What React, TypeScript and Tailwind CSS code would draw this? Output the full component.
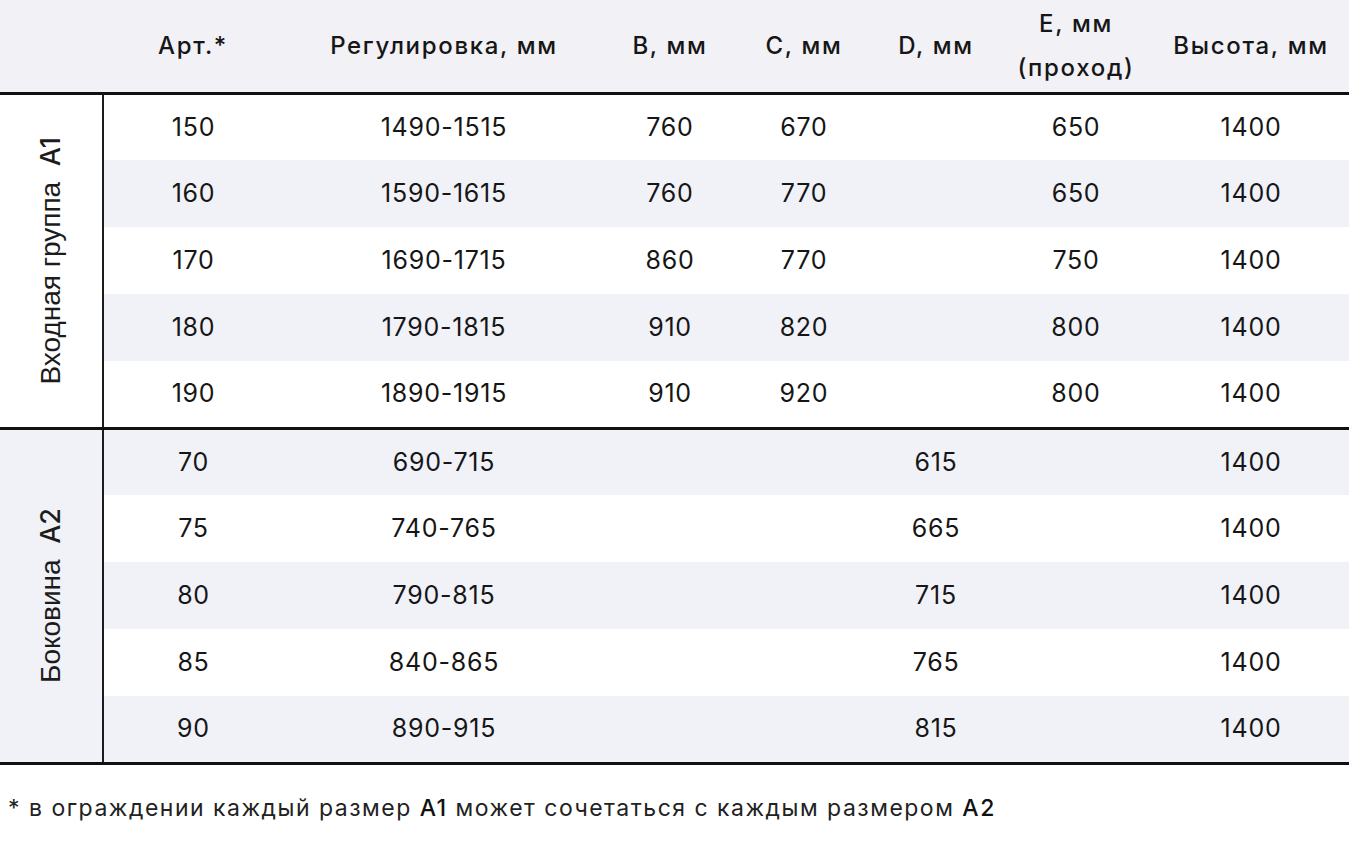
const a1 = [
  ['150', '1490-1515', '760', '670', '', '650', '1400'],
  ['160', '1590-1615', '760', '770', '', '650', '1400'],
  ['170', '1690-1715', '860', '770', '', '750', '1400'],
  ['180', '1790-1815', '910', '820', '', '800', '1400'],
  ['190', '1890-1915', '910', '920', '', '800', '1400'],
]

const a2 = [
  ['70', '690-715', '', '', '615', '', '1400'],
  ['75', '740-765', '', '', '665', '', '1400'],
  ['80', '790-815', '', '', '715', '', '1400'],
  ['85', '840-865', '', '', '765', '', '1400'],
  ['90', '890-915', '', '', '815', '', '1400'],
]

const widths = ['w-[180px]', 'w-[322px]', 'w-[130px]', 'w-[138px]', 'w-[126px]', 'w-[154px]', 'w-[196px]']

function GroupRows({ rows, label, code, shadeLabel }: {
  rows: string[][]
  label: string
  code: string
  shadeLabel: boolean
}) {
  return (
    <>
      {rows.map((row, i) => (
        <tr
          key={row[0]}
          className={`${i % 2 === (shadeLabel ? 0 : 1) ? 'bg-[#f1f1f8]' : 'bg-white'} ${i === rows.length - 1 ? 'border-b-[3px] border-[#111]' : ''}`}
        >
          {i === 0 && (
            <td
              rowSpan={rows.length}
              className={`border-r-2 border-[#1c1c1c] p-0 align-middle ${shadeLabel ? 'bg-[#f1f1f8]' : 'bg-white'}`}
            >
              <div className="flex justify-center">
                <span
                  className="whitespace-nowrap text-[28px] leading-none text-[#1c1c1c] [writing-mode:vertical-rl] rotate-180"
                  style={{ fontFamily: '"Liberation Sans", Arial, sans-serif' }}
                >
                  {label}
                  {'\u00a0\u00a0'}
                  <span className="font-['Inter'] text-[27px] font-medium">{code}</span>
                </span>
              </div>
            </td>
          )}
          {row.map((cell, j) => (
            <td key={j} className="h-[67px] p-0 text-center text-[25px] tracking-[0.03em] text-[#161616]">
              {cell}
            </td>
          ))}
        </tr>
      ))}
    </>
  )
}

export default function App() {
  return (
    <div className="min-h-[845px] bg-white font-['Inter',sans-serif] text-[#161616]">
      <table className="w-[1349px] table-fixed border-collapse">
        <colgroup>
          <col className="w-[103px]" />
          {widths.map((w) => (
            <col key={w} className={w} />
          ))}
        </colgroup>
        <thead>
          <tr className="h-[93px] border-b-[3px] border-[#111] bg-[#f1f1f6] text-[24px] tracking-[0.07em]">
            <th className="p-0" />
            <th className="p-0 font-medium">Арт.*</th>
            <th className="p-0 font-medium">Регулировка, мм</th>
            <th className="p-0 font-medium">B, мм</th>
            <th className="p-0 font-medium">C, мм</th>
            <th className="p-0 font-medium">D, мм</th>
            <th className="p-0 font-medium leading-[44px]">
              E, мм
              <br />
              (проход)
            </th>
            <th className="p-0 font-medium">Высота, мм</th>
          </tr>
        </thead>
        <tbody>
          <GroupRows rows={a1} label="Входная группа" code="A1" shadeLabel={false} />
          <GroupRows rows={a2} label="Боковина" code="A2" shadeLabel={true} />
        </tbody>
      </table>
      <p className="mt-[26px] pl-[8px] text-[23px] tracking-[0.065em] text-[#222]">
        * в ограждении каждый размер <span className="font-medium text-[#111]">A1</span> может сочетаться с каждым размером{' '}
        <span className="font-medium text-[#111]">A2</span>
      </p>
    </div>
  )
}
